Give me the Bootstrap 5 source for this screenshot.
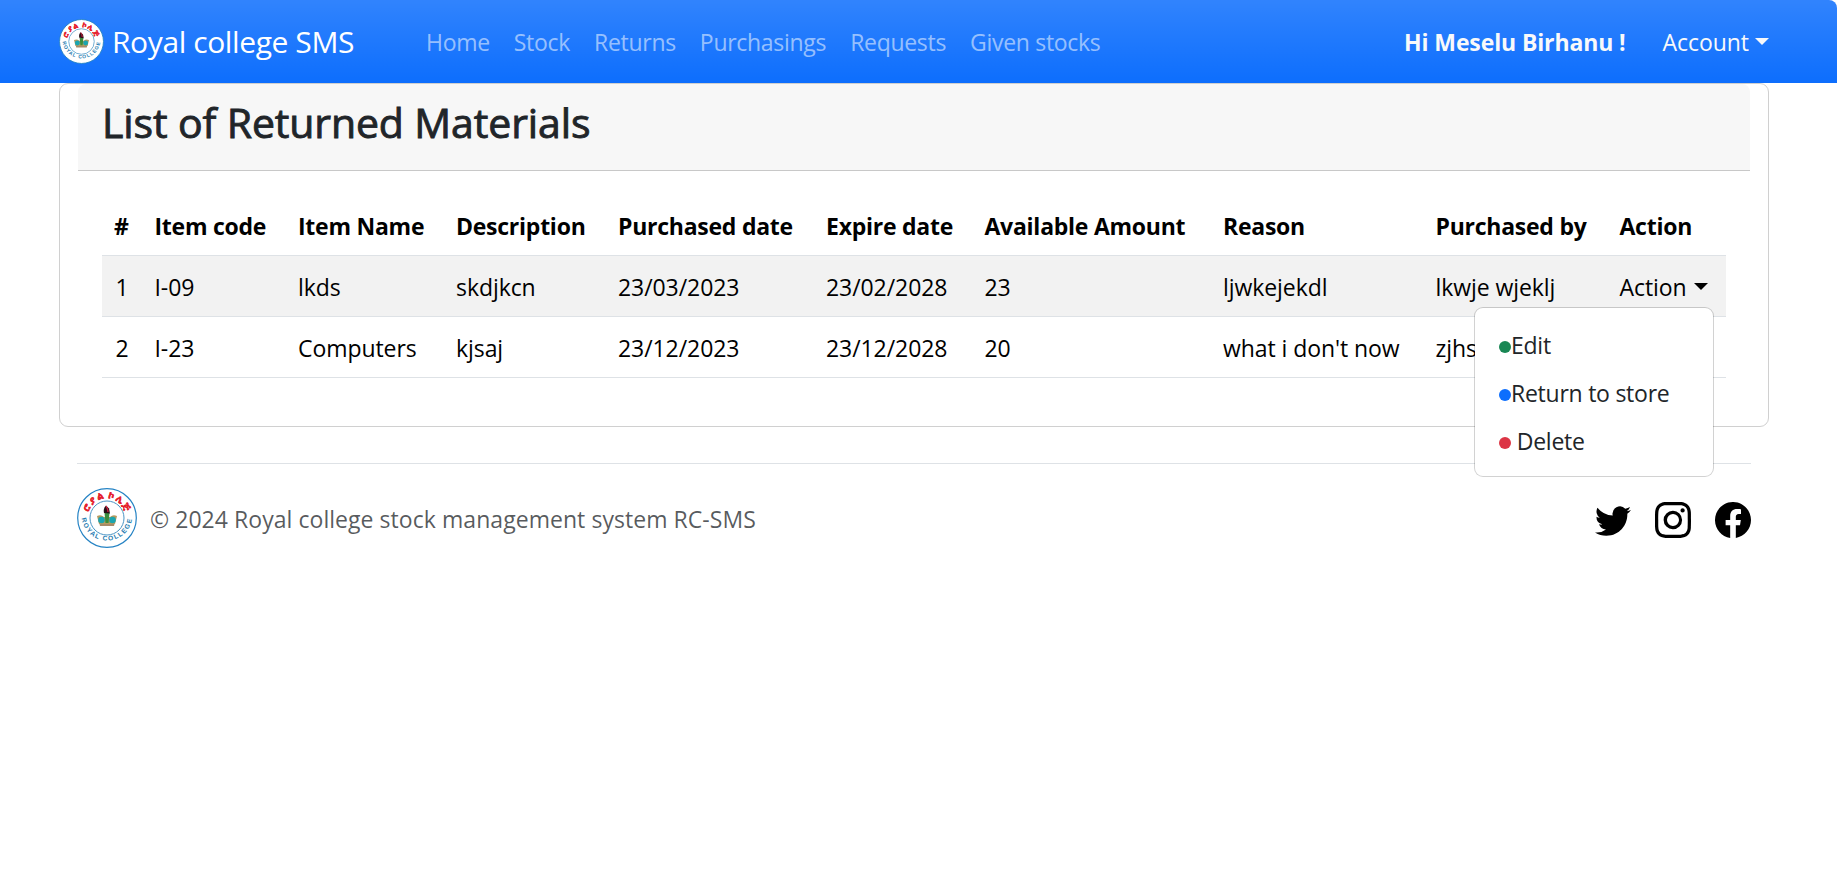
<!DOCTYPE html>
<html lang="en">
<head>
<meta charset="utf-8">
<meta name="viewport" content="width=device-width, initial-scale=1">
<title>Royal college SMS</title>
<link href="https://cdn.jsdelivr.net/npm/bootstrap@5.3.0/dist/css/bootstrap.min.css" rel="stylesheet">
<style>
html{font-size:24px}
body{font-family:"Open Sans","Noto Sans",sans-serif;font-size:23px;line-height:36px;letter-spacing:-.07px;overflow:hidden}
.container{max-width:1710px;margin-left:59px;--bs-gutter-x:36px}
.navbar{height:83px;border-top-right-radius:8px}
.brand-text{font-size:30px;letter-spacing:-.4px;margin-left:8px}
.navbar-brand{width:355px}
.navbar .nav-link{font-size:23px;letter-spacing:-.3px}
.navbar-dark{--bs-navbar-color:rgba(255,255,255,.55)}
.greeting{margin-right:37px;letter-spacing:-.12px}
.account{letter-spacing:-.05px}
.page-card{height:344px;border-radius:9px;border-color:#d0d0d0}
.page-title{font-size:41px;line-height:50px;padding-top:1px;font-weight:500;letter-spacing:-.12px;-webkit-text-stroke:.9px currentColor}
.page-card .card-header{height:87px;padding:12px 24px;border-radius:8px 8px 0 0;background:#f7f7f7;border-color:#c8c8c8}
.page-card .card-body{padding:24px}
.stock-table{table-layout:fixed;--bs-table-color:#000;--bs-table-striped-color:#000;color:#000}
.stock-table th,.stock-table td{padding:13px 12px 11px;white-space:nowrap;height:61px}
.stock-table th{letter-spacing:-.25px;height:60px;padding:12px 12px 11px}
.stock-table td.text-end{padding-right:14px}
.dropdown-toggle::after{margin-left:7px;vertical-align:6px;border-top-width:7px;border-left-width:7px;border-right-width:7px}
.account.dropdown-toggle::after{margin-left:6px}
.row-menu{font-size:23px;top:51px;right:12px;width:240px;border-radius:9px;padding:13px 0 11px;letter-spacing:-.25px}
.row-menu .dropdown-item{padding:6px 24px;display:flex;align-items:center}
.dot{width:12px;height:12px;border-radius:50%;margin-top:4px}
.page-footer{margin-top:36px;padding-top:24px}
.copyright{margin-left:13px;padding-top:2px;letter-spacing:.05px}
.social{gap:24px;padding-top:4px}
</style>
</head>
<body>
<nav class="navbar navbar-expand navbar-dark bg-primary bg-gradient p-0">
  <div class="container px-0 flex-nowrap">
    <a class="navbar-brand d-flex align-items-center m-0 p-0" href="#">
      <svg width="45" height="45" viewBox="0 0 60 60"><use href="#crest"/></svg><span class="brand-text">Royal college SMS</span>
    </a>
    <ul class="navbar-nav me-auto">
      <li class="nav-item"><a class="nav-link" href="#">Home</a></li>
      <li class="nav-item"><a class="nav-link" href="#">Stock</a></li>
      <li class="nav-item"><a class="nav-link" href="#">Returns</a></li>
      <li class="nav-item"><a class="nav-link" href="#">Purchasings</a></li>
      <li class="nav-item"><a class="nav-link" href="#">Requests</a></li>
      <li class="nav-item"><a class="nav-link" href="#">Given stocks</a></li>
    </ul>
    <strong class="greeting text-light">Hi Meselu Birhanu !</strong>
    <a class="account dropdown-toggle text-light text-decoration-none" href="#">Account</a>
  </div>
</nav>

<div class="container card page-card">
  <div class="card-header"><h3 class="page-title m-0">List of Returned Materials</h3></div>
  <div class="card-body">
    <table class="table table-striped stock-table m-0">
      <colgroup><col style="width:40.5px"><col style="width:143.5px"><col style="width:158px"><col style="width:162px"><col style="width:208px"><col style="width:158.5px"><col style="width:238.5px"><col style="width:212.5px"><col style="width:184px"><col></colgroup>
      <thead><tr><th>#</th><th>Item code</th><th>Item Name</th><th>Description</th><th>Purchased date</th><th>Expire date</th><th>Available Amount</th><th>Reason</th><th>Purchased by</th><th>Action</th></tr></thead>
      <tbody>
        <tr><td class="text-end">1</td><td>I-09</td><td>lkds</td><td>skdjkcn</td><td>23/03/2023</td><td>23/02/2028</td><td>23</td><td>ljwkejekdl</td><td>lkwje wjeklj</td>
          <td class="position-relative"><a class="dropdown-toggle text-black text-decoration-none" href="#">Action</a>
            <div class="dropdown-menu show row-menu">
              <a class="dropdown-item" href="#"><span class="dot bg-success"></span>Edit</a>
              <a class="dropdown-item" href="#"><span class="dot bg-primary"></span>Return to store</a>
              <a class="dropdown-item" href="#"><span class="dot bg-danger"></span>&nbsp;Delete</a>
            </div></td></tr>
        <tr><td class="text-end">2</td><td>I-23</td><td>Computers</td><td>kjsaj</td><td>23/12/2023</td><td>23/12/2028</td><td>20</td><td>what i don't now</td><td>zjhs</td><td></td></tr>
      </tbody>
    </table>
  </div>
</div>

<div class="container">
  <footer class="page-footer border-top d-flex align-items-center">
    <svg width="60" height="60" viewBox="0 0 60 60">
      <defs>
        <path id="arc-top" d="M10.500 30a19.500 19.500 0 0 1 39 0"/>
        <path id="arc-bottom" d="M4.500 27a25.500 25.500 0 1 0 51 0"/>
      </defs>
      <g id="crest">
        <circle cx="30" cy="30" r="29.3" fill="#fff" stroke="#2583c4" stroke-width="1.2"/>
        <circle cx="30" cy="30" r="17" fill="#fff" stroke="#4a94c4" stroke-width="1"/>
        <text font-size="10" font-weight="700" fill="#e5202c" stroke="#e5202c" stroke-width=".3" text-anchor="middle" letter-spacing="1"><textPath href="#arc-top" startOffset="50%">ሮያል ኮሌጅ</textPath></text>
        <text font-family="Liberation Sans,sans-serif" font-size="6.6" font-weight="700" fill="#1d7ab0" text-anchor="middle" letter-spacing="1.3"><textPath href="#arc-bottom" startOffset="50%">ROYAL COLLEGE</textPath></text>
        <path d="M22 34h16l-1 4H23z" fill="#a88a68"/>
        <path d="M20 28q4-2 7 1h6q3-3 7-1l-2 8H22z" fill="#b79a5e"/>
        <circle cx="24.500" cy="32" r="3.300" fill="#1aa5b0"/><circle cx="35.500" cy="32" r="3.300" fill="#1aa5b0"/>
        <path d="M27.500 25h5l-1 10h-3z" fill="#3a8d3c"/>
        <path d="M27 25q-1-5 2-7.500l3 3 1 5z" fill="#2a1018"/>
        <path d="M29 18q2 3 2 6" stroke="#d31f3c" stroke-width="1.300" fill="none"/>
      </g>
    </svg>
    <span class="copyright text-body-secondary">© 2024 Royal college stock management system RC-SMS</span>
    <div class="social d-flex ms-auto">
      <svg width="36" height="36" viewBox="0 0 16 16"><path d="M5.026 15c6.038 0 9.341-5.003 9.341-9.334 0-.14 0-.282-.006-.422A6.685 6.685 0 0 0 16 3.542a6.658 6.658 0 0 1-1.889.518 3.301 3.301 0 0 0 1.447-1.817 6.533 6.533 0 0 1-2.087.793A3.286 3.286 0 0 0 7.875 6.03a9.325 9.325 0 0 1-6.767-3.429 3.289 3.289 0 0 0 1.018 4.382A3.323 3.323 0 0 1 .64 6.575v.045a3.288 3.288 0 0 0 2.632 3.218 3.203 3.203 0 0 1-.865.115 3.230 3.230 0 0 1-.614-.057 3.283 3.283 0 0 0 3.067 2.277A6.588 6.588 0 0 1 .78 13.580a6.320 6.320 0 0 1-.78-.045A9.344 9.344 0 0 0 5.026 15z"/></svg>
      <svg width="36" height="36" viewBox="0 0 16 16"><path d="M8 0C5.829 0 5.556.01 4.703.048 3.850.088 3.269.222 2.760.420a3.917 3.917 0 0 0-1.417.923A3.927 3.927 0 0 0 .420 2.760C.222 3.268.087 3.850.048 4.700.010 5.555 0 5.827 0 8.001c0 2.172.010 2.444.048 3.297.040.852.174 1.433.372 1.942.205.526.478.972.923 1.417.444.445.890.719 1.416.923.510.198 1.090.333 1.942.372C5.555 15.990 5.827 16 8 16s2.444-.010 3.298-.048c.851-.040 1.434-.174 1.943-.372a3.916 3.916 0 0 0 1.416-.923c.445-.445.718-.891.923-1.417.197-.509.332-1.090.372-1.942C15.990 10.445 16 10.173 16 8s-.010-2.445-.048-3.299c-.040-.851-.175-1.433-.372-1.941a3.926 3.926 0 0 0-.923-1.417A3.911 3.911 0 0 0 13.240.420c-.510-.198-1.092-.333-1.943-.372C10.443.010 10.172 0 7.998 0h.003zm-.717 1.442h.718c2.136 0 2.389.007 3.232.046.780.035 1.204.166 1.486.275.373.145.640.319.920.599.280.280.453.546.598.920.110.281.240.705.275 1.485.039.843.047 1.096.047 3.231s-.008 2.389-.047 3.232c-.035.780-.166 1.203-.275 1.485a2.470 2.470 0 0 1-.599.919c-.280.280-.546.453-.920.598-.280.110-.704.240-1.485.276-.843.038-1.096.047-3.232.047s-2.390-.009-3.233-.047c-.780-.036-1.203-.166-1.485-.276a2.478 2.478 0 0 1-.920-.598 2.480 2.480 0 0 1-.600-.920c-.109-.281-.240-.705-.275-1.485-.038-.843-.046-1.096-.046-3.233 0-2.136.008-2.388.046-3.231.036-.780.166-1.204.276-1.486.145-.373.319-.640.599-.920.280-.280.546-.453.920-.598.282-.110.705-.240 1.485-.276.738-.034 1.024-.044 2.515-.045v.002zm4.988 1.328a.960.960 0 1 0 0 1.920.960.960 0 0 0 0-1.920zm-4.270 1.122a4.109 4.109 0 1 0 0 8.217 4.109 4.109 0 0 0 0-8.217zm0 1.441a2.667 2.667 0 1 1 0 5.334 2.667 2.667 0 0 1 0-5.334z"/></svg>
      <svg width="36" height="36" viewBox="0 0 16 16"><path d="M16 8.049c0-4.446-3.582-8.050-8-8.050C3.580 0-.002 3.603-.002 8.050c0 4.017 2.926 7.347 6.750 7.951v-5.625h-2.030V8.050H6.750V6.275c0-2.017 1.195-3.131 3.022-3.131.876 0 1.791.157 1.791.157v1.980h-1.009c-.993 0-1.303.621-1.303 1.258v1.510h2.218l-.354 2.326H9.250V16c3.824-.604 6.750-3.934 6.750-7.951z"/></svg>
    </div>
  </footer>
</div>
<script src="https://cdn.jsdelivr.net/npm/bootstrap@5.3.0/dist/js/bootstrap.bundle.min.js"></script>
</body>
</html>
